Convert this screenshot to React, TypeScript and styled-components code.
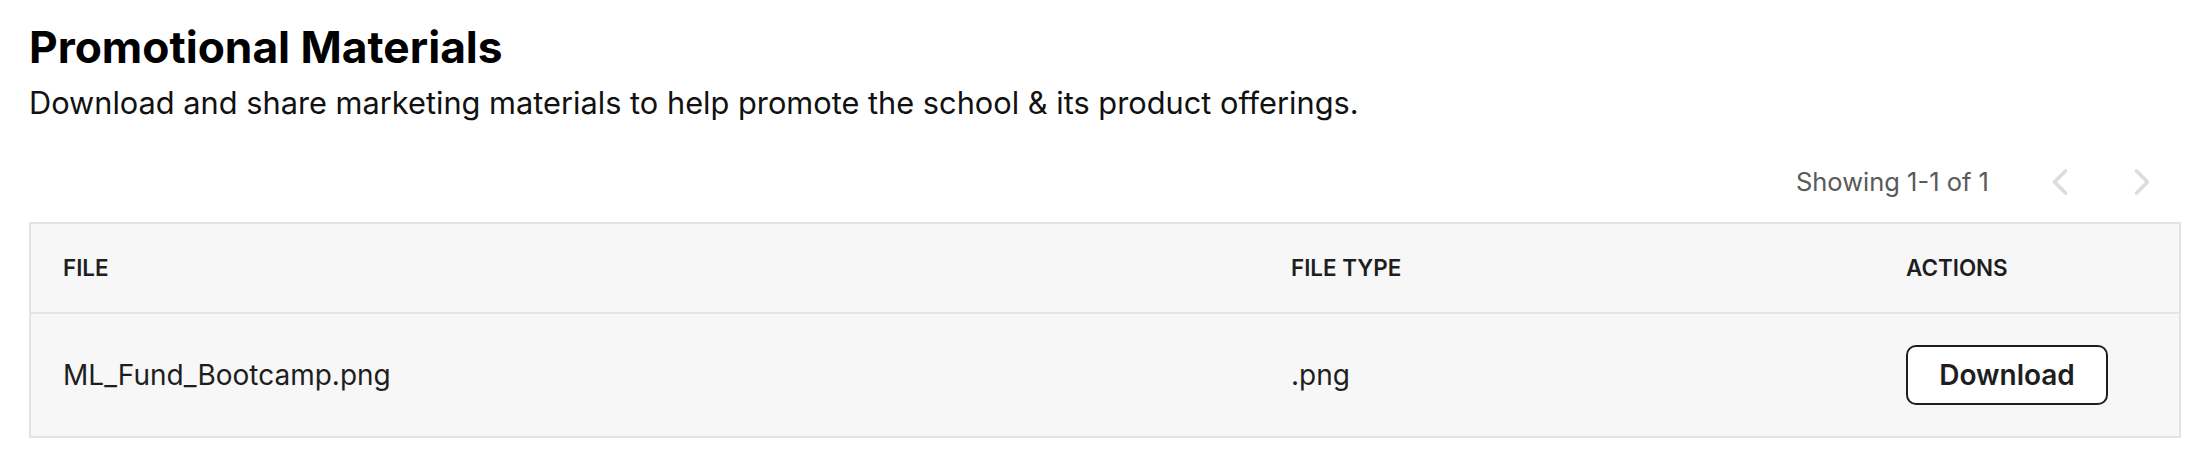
import React from "react";
import styled, { createGlobalStyle } from "styled-components";
import { ChevronLeft, ChevronRight } from "lucide-react";

const Global = createGlobalStyle`
  html, body { margin: 0; padding: 0; background: #ffffff; }
  body { font-family: Inter, "Noto Sans", "Liberation Sans", sans-serif; color: #111; }
  * { box-sizing: border-box; }
`;

const Page = styled.div`
  padding: 20px 21px 0 29px;
  width: 2202px;
`;

const Title = styled.h1`
  margin: 0;
  font-size: 44.3px;
  line-height: 55px;
  font-weight: 700;
  letter-spacing: 0;
  color: #000;
`;

const Subtitle = styled.p`
  margin: 6px 0 0 0;
  font-size: 30.75px;
  line-height: 44px;
  font-weight: 400;
  color: #111;
`;

const PagerBar = styled.div`
  margin-top: 25px;
  height: 64px;
  display: flex;
  align-items: center;
  justify-content: flex-end;
  padding-right: 7px;
`;

const PagerText = styled.span`
  font-size: 25.5px;
  line-height: 32px;
  color: #5a5a5a;
  margin-right: 39px;
`;

const PagerButton = styled.button`
  width: 64px;
  height: 64px;
  border: 0;
  background: transparent;
  padding: 0;
  display: flex;
  align-items: center;
  justify-content: center;
  color: #dcdcdc;
  cursor: default;
  & + & { margin-left: 18px; }
`;

const Table = styled.div`
  margin-top: 8px;
  border: 2px solid #e4e4e4;
  background: #f7f7f7;
`;

const Row = styled.div<{ $head?: boolean }>`
  display: grid;
  grid-template-columns: 1228fr 615fr 305fr;
  align-items: center;
  height: ${(p) => (p.$head ? "88px" : "124px")};
  & + & { border-top: 2px solid #e4e4e4; }
`;

const HeadCell = styled.div`
  padding-left: 32px;
  font-size: 22.4px;
  line-height: 32px;
  font-weight: 600;
  text-transform: uppercase;
  color: #1e1e1e;
`;

const Cell = styled.div`
  padding-left: 32px;
  font-size: 28px;
  line-height: 40px;
  font-weight: 400;
  color: #1e1e1e;
`;

const DownloadButton = styled.button`
  height: 60px;
  width: 202px;
  border: 2px solid #1e1e1e;
  border-radius: 10px;
  background: #ffffff;
  font-family: Inter, "Noto Sans", "Liberation Sans", sans-serif;
  font-size: 28px;
  font-weight: 600;
  color: #1e1e1e;
  padding: 0;
  cursor: pointer;
`;

const files = [{ name: "ML_Fund_Bootcamp.png", type: ".png" }];

export default function App() {
  return (
    <>
      <Global />
      <Page>
        <Title>Promotional Materials</Title>
        <Subtitle>
          Download and share marketing materials to help promote the school &amp; its product offerings.
        </Subtitle>
        <PagerBar>
          <PagerText>Showing 1-1 of 1</PagerText>
          <PagerButton aria-label="Previous page">
            <ChevronLeft size={44} strokeWidth={2} />
          </PagerButton>
          <PagerButton aria-label="Next page">
            <ChevronRight size={44} strokeWidth={2} />
          </PagerButton>
        </PagerBar>
        <Table>
          <Row $head>
            <HeadCell>File</HeadCell>
            <HeadCell>File Type</HeadCell>
            <HeadCell>Actions</HeadCell>
          </Row>
          {files.map((f) => (
            <Row key={f.name}>
              <Cell>{f.name}</Cell>
              <Cell>{f.type}</Cell>
              <Cell>
                <DownloadButton>Download</DownloadButton>
              </Cell>
            </Row>
          ))}
        </Table>
      </Page>
    </>
  );
}
